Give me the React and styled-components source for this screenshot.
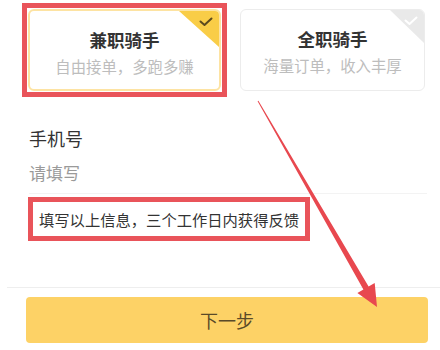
import React from "react";
import styled, { createGlobalStyle } from "styled-components";

const GlobalStyle = createGlobalStyle`
  html, body { margin: 0; padding: 0; background: #ffffff; }
  body { font-family: "Noto Sans CJK SC", "Noto Sans", sans-serif; }
`;

const Page = styled.div`
  position: relative;
  width: 440px;
  height: 350px;
  overflow: hidden;
  background: #ffffff;
`;

const CardsRow = styled.div`
  display: flex;
  align-items: flex-start;
  padding: 3px 0 0 22px;
`;

const Highlight = styled.div`
  border: 5px solid #e9545a;
  padding: 1px;
  display: flex;
  align-items: center;
  flex-shrink: 0;
`;

const Card = styled.div`
  position: relative;
  box-sizing: border-box;
  width: ${(p) => p.$w}px;
  height: 82px;
  margin: ${(p) => p.$m || "0"};
  border: ${(p) => (p.$active ? "2px solid #fde3a2" : "1.5px solid #ececec")};
  border-radius: 6px;
  background: #ffffff;
  overflow: hidden;
  display: flex;
  flex-direction: column;
  align-items: center;
  padding-top: 18px;
`;

const Corner = styled.div`
  position: absolute;
  top: 0;
  right: 0;
  width: ${(p) => (p.$active ? 40 : 34)}px;
  height: ${(p) => (p.$active ? 36 : 33)}px;
  background: ${(p) => (p.$active ? "#f9cd47" : "#e9e9e9")};
  clip-path: polygon(0 0, 100% 0, 100% 100%);
`;

const Check = styled.svg`
  position: absolute;
  top: 6px;
  right: 6px;
`;

const CardTitle = styled.div`
  font-size: 17.5px;
  line-height: 22px;
  font-weight: 700;
  color: #333333;
`;

const CardSub = styled.div`
  margin-top: 5px;
  font-size: 15.4px;
  line-height: 20px;
  color: #bdbdbd;
  white-space: nowrap;
`;

const Form = styled.div`
  display: flex;
  flex-direction: column;
  align-items: flex-start;
  padding: 0 13px 0 29px;
`;

const Label = styled.div`
  margin-top: 29px;
  font-size: 18px;
  line-height: 24px;
  color: #333333;
`;

const Placeholder = styled.div`
  margin-top: 11px;
  font-size: 17px;
  line-height: 24px;
  color: #9a9a9a;
`;

const Divider = styled.div`
  align-self: stretch;
  height: 1px;
  margin-top: ${(p) => p.$mt || 0}px;
  background: ${(p) => p.$c || "#f3f3f3"};
`;

const Notice = styled.div`
  box-sizing: border-box;
  margin: 3px 0 0 -1px;
  width: 282px;
  height: 44px;
  border: 5px solid #e9545a;
  display: flex;
  align-items: center;
  padding-left: 6px;
  font-size: 15.3px;
  color: #333333;
  white-space: nowrap;
`;

const Footer = styled.div`
  display: flex;
  flex-direction: column;
  padding-left: 7px;
`;

const NextButton = styled.button`
  box-sizing: border-box;
  margin: 9px 0 0 19px;
  width: 402px;
  height: 46px;
  border: none;
  border-radius: 4px;
  background: #fdd266;
  color: #5a4a28;
  font-family: "Noto Sans CJK SC", "Noto Sans", sans-serif;
  font-size: 18px;
  padding: 0;
`;

const ArrowLayer = styled.svg`
  position: absolute;
  left: 0;
  top: 0;
  pointer-events: none;
`;

function RoleCard({ title, sub, active, w, m }) {
  return (
    <Card $active={active} $w={w} $m={m}>
      <Corner $active={active} />
      <Check width="14" height="10" viewBox="0 0 14 10">
        <polyline
          points="1.5,4.5 5.5,8 12.5,1.5"
          fill="none"
          stroke={active ? "#5c4a1e" : "#ffffff"}
          strokeWidth="2"
          strokeLinecap="round"
          strokeLinejoin="round"
        />
      </Check>
      <CardTitle>{title}</CardTitle>
      <CardSub>{sub}</CardSub>
    </Card>
  );
}

export default function App() {
  return (
    <>
      <GlobalStyle />
      <Page>
        <CardsRow>
          <Highlight>
            <RoleCard title="兼职骑手" sub="自由接单，多跑多赚" active w={193} />
          </Highlight>
          <RoleCard title="全职骑手" sub="海量订单，收入丰厚" w={185} m="6px 0 0 13px" />
        </CardsRow>
        <Form>
          <Label>手机号</Label>
          <Placeholder>请填写</Placeholder>
          <Divider $mt={8} />
          <Notice>填写以上信息，三个工作日内获得反馈</Notice>
        </Form>
        <Footer>
          <Divider $mt={46} $c="#eeeeee" />
          <NextButton>下一步</NextButton>
        </Footer>
        <ArrowLayer width="440" height="350" viewBox="0 0 440 350">
          <polygon
            points="257.6,101.3 363.4,289.5 357.4,293.0 377,307 374.7,283.0 368.6,286.5 258.4,100.7"
            fill="#e8484f"
          />
        </ArrowLayer>
      </Page>
    </>
  );
}
